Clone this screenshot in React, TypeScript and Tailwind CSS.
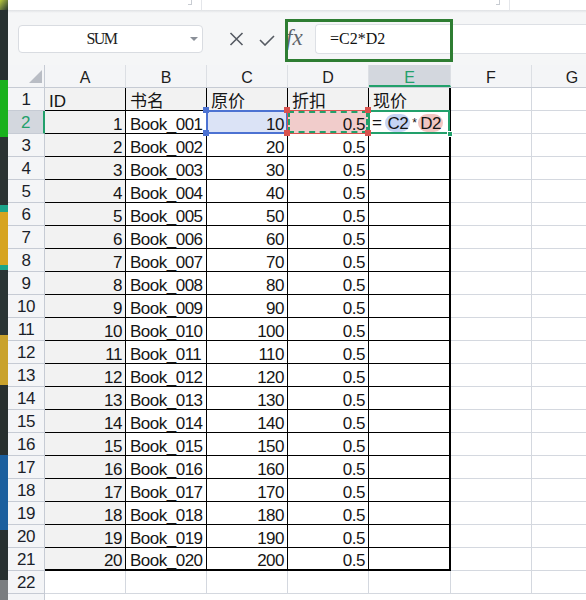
import React from "react";

const sans = { fontFamily: '"Liberation Sans", "Noto Sans CJK SC", Arial, sans-serif' };
const serif = { fontFamily: '"Liberation Serif", "Noto Sans CJK SC", serif' };

const COLS = ["A", "B", "C", "D", "E", "F", "G"];
const WIDTHS = ["w-[81px]", "w-[81px]", "w-[81px]", "w-[81px]", "w-[82px]", "w-[81px]", "w-[81px]"];
const HEAD = ["ID", "书名", "原价", "折扣", "现价"];

function pad(n: number) {
  return String(n).padStart(3, "0");
}

function DesktopStrip() {
  return (
    <div className="flex w-[8px] shrink-0 flex-col">
      <div className="h-[10px] bg-gradient-to-br from-[#b7c83a] to-[#2a3a2a]" />
      <div className="h-[70px] bg-[#273030]" />
      <div className="h-[57px] bg-[#19b11c]" />
      <div className="h-[68px] bg-[#2b3333]" />
      <div className="h-[7px] bg-[#1ca58a]" />
      <div className="h-[53px] bg-[#d6a420]" />
      <div className="h-[5px] bg-[#1ca58a]" />
      <div className="h-[65px] bg-[#2a3434]" />
      <div className="h-[50px] bg-[#c9a22c]" />
      <div className="h-[70px] bg-[#28302f]" />
      <div className="h-[75px] bg-[#1b5f9e]" />
      <div className="h-[50px] bg-[#283131]" />
      <div className="flex-1 bg-[#7a7d80]" />
    </div>
  );
}

function TopStrip() {
  return (
    <>
      <div className="flex h-[10px] bg-white">
        <div className="relative w-[194px] border-r border-[#e4e6ea]">
          <div className="absolute right-[9px] top-0 h-[5px] w-[4px] border-b border-r border-[#c8ccd2]" />
        </div>
        <div className="relative w-[308px] border-r border-[#e4e6ea]">
          <div className="absolute right-[9px] top-0 h-[5px] w-[4px] border-b border-r border-[#c8ccd2]" />
        </div>
      </div>
      <div className="h-[3px] bg-gradient-to-b from-[#dfe1e4] to-[#f5f6f7]" />
    </>
  );
}

function FormulaBar() {
  return (
    <div className="relative flex h-[52px] items-center">
      <div className="ml-[10px] flex h-[28px] w-[185px] items-center rounded-[4px] border border-[#d9dce1] bg-white">
        <span className="flex-1 pr-[6px] text-center text-[16px] tracking-[-1.5px] text-[#1d1d1d]" style={serif}>
          SUM
        </span>
        <svg width="8" height="5" viewBox="0 0 8 5" className="mr-[4px]">
          <path d="M0 0 L8 0 L4 4 Z" fill="#8a8f98" />
        </svg>
      </div>
      <svg width="15" height="14" viewBox="0 0 15 14" className="ml-[26px]">
        <path d="M1.5 1 L13.5 13 M13.5 1 L1.5 13" stroke="#555a62" strokeWidth="1.6" fill="none" />
      </svg>
      <svg width="16" height="11" viewBox="0 0 16 11" className="ml-[15px] mt-[2px]">
        <path d="M1 5 L6 10 L15 1" stroke="#555a62" strokeWidth="1.6" fill="none" />
      </svg>
      <div className="w-[40px] pl-[11px]">
        <span className="text-[23px] italic leading-none text-[#5f646b]" style={serif}>
          fx
        </span>
      </div>
      <div className="flex h-[30px] flex-1 items-center rounded-l-[4px] border border-r-0 border-[#dde0e5] bg-white pl-[14px]">
        <span className="text-[16px] text-[#111]" style={serif}>
          =C2*D2
        </span>
      </div>
      <div className="absolute left-[277px] top-[6px] h-[43px] w-[168px] border-[3px] border-[#2e7d32]" />
    </div>
  );
}

function ColumnHeader() {
  return (
    <div className="flex h-[23px] border-b border-[#c6cbd4] bg-[#f4f5f7]">
      <div className="relative w-[37px] shrink-0 border-r border-[#c6cbd4]">
        <svg width="13" height="13" viewBox="0 0 13 13" className="absolute left-[21px] top-[5px]">
          <path d="M13 0 L13 13 L0 13 Z" fill="#b9bdc5" />
        </svg>
      </div>
      {COLS.map((c, i) => (
        <div
          key={c}
          className={`${WIDTHS[i]} shrink-0 overflow-hidden text-center text-[16px] leading-[25px] ${
            i === 4
              ? "border-b-2 border-r border-b-[#22a06b] border-r-[#dcdfe4] bg-[#d3d7de] text-[#22a06b]"
              : "border-r border-[#dcdfe4] text-[#1d1d1d]"
          }`}
        >
          {c}
        </div>
      ))}
    </div>
  );
}

function CellContent({ r, c }: { r: number; c: number }) {
  if (r === 1 && c < 5) {
    return <span className="pl-[4px] tracking-normal">{HEAD[c]}</span>;
  }
  if (r > 21 || c > 4) return null;
  const i = r - 1;
  if (c === 0) return <span className="ml-auto pr-[3px]">{i}</span>;
  if (c === 1) return <span className="pl-[4px]">Book_{pad(i)}</span>;
  if (c === 2) return <span className="ml-auto pr-[3px]">{i * 10}</span>;
  if (c === 3) return <span className="ml-auto pr-[3px]">0.5</span>;
  if (c === 4 && r === 2) {
    return (
      <span className="-mt-[3px] flex items-center pl-[3px]">
        <span className="mr-[4px]">=</span>
        <span className="flex h-[18px] items-center rounded-full bg-[#c6d4f4] px-[2px] pt-[1px]">C2</span>
        <span className="mx-[2px] text-[12px]">*</span>
        <span className="flex h-[18px] items-center rounded-full bg-[#f1c5c1] px-[2px] pt-[1px]">D2</span>
      </span>
    );
  }
  return null;
}

function Handles({ color }: { color: string }) {
  return (
    <>
      <div className={`absolute -left-[4px] -top-[4px] z-20 h-[6px] w-[6px] ${color}`} />
      <div className={`absolute -right-[3px] -top-[4px] z-20 h-[6px] w-[6px] ${color}`} />
      <div className={`absolute -bottom-[3px] -left-[4px] z-20 h-[6px] w-[6px] ${color}`} />
      <div className={`absolute -bottom-[3px] -right-[3px] z-20 h-[6px] w-[6px] ${color}`} />
    </>
  );
}

function Cell({ r, c }: { r: number; c: number }) {
  const inTable = r <= 21 && c <= 4;
  let border = "border-r border-b border-[#d4d8df]";
  if (inTable) {
    if (c === 4 && r === 21) border = "border-r-2 border-b-2 border-black";
    else if (c === 4) border = "border-r-2 border-b border-black";
    else if (r === 21) border = "border-r border-b-2 border-black";
    else border = "border-r border-b border-black";
  }
  let bg = "bg-white";
  if (inTable && (r === 1 || c === 0)) bg = "bg-[#f2f2f2]";
  if (r === 2 && c === 2) bg = "bg-[#dbe3f6]";
  if (r === 2 && c === 3) bg = "bg-[#f1cccb]";

  return (
    <div
      className={`relative flex ${WIDTHS[c]} shrink-0 items-center pt-[5px] text-[17px] tracking-[-0.5px] text-[#151515] ${border} ${bg}`}
    >
      <CellContent r={r} c={c} />
      {r === 2 && c === 2 && (
        <>
          <div className="absolute inset-[-1px] z-10 border-2 border-[#4c72d2]" />
          <Handles color="bg-[#4c72d2]" />
        </>
      )}
      {r === 2 && c === 3 && (
        <>
          <div className="absolute inset-[-1px] z-10 border border-[#d9534f]">
            <div className="h-full w-full border-2 border-dashed border-[#22a06b]" />
          </div>
          <Handles color="bg-[#d9534f]" />
        </>
      )}
      {r === 2 && c === 4 && (
        <>
          <div className="absolute inset-[-1px] z-10 border-2 border-[#22a06b]" />
          <div className="absolute -bottom-[4px] -right-[4px] z-20 h-[6px] w-[6px] border border-white bg-[#22a06b]" />
        </>
      )}
    </div>
  );
}

function Row({ r }: { r: number }) {
  const active = r === 2;
  return (
    <div className="flex h-[23px]">
      <div
        className={`w-[37px] shrink-0 border-b border-[#c6cbd4] pt-[2px] text-center text-[17px] leading-[20px] tracking-[-0.5px] ${
          active
            ? "border-r-2 border-r-[#22a06b] bg-[#d3d7de] text-[#22a06b]"
            : "border-r border-r-[#c6cbd4] bg-[#f4f5f7] text-[#1b1f2a]"
        }`}
      >
        {r}
      </div>
      {COLS.map((c, i) => (
        <Cell key={c} r={r} c={i} />
      ))}
    </div>
  );
}

export default function App() {
  const rows = Array.from({ length: 22 }, (_, i) => i + 1);
  return (
    <div className="flex h-[600px] w-[586px] overflow-hidden" style={sans}>
      <DesktopStrip />
      <div className="flex min-w-0 flex-1 flex-col overflow-hidden bg-[#f5f6f7]">
        <TopStrip />
        <FormulaBar />
        <div className="flex flex-1 flex-col bg-white">
          <ColumnHeader />
          {rows.map((r) => (
            <Row key={r} r={r} />
          ))}
          <div className="flex flex-1">
            <div className="w-[37px] shrink-0 border-r border-[#c6cbd4] bg-[#f4f5f7]" />
          </div>
        </div>
      </div>
    </div>
  );
}
